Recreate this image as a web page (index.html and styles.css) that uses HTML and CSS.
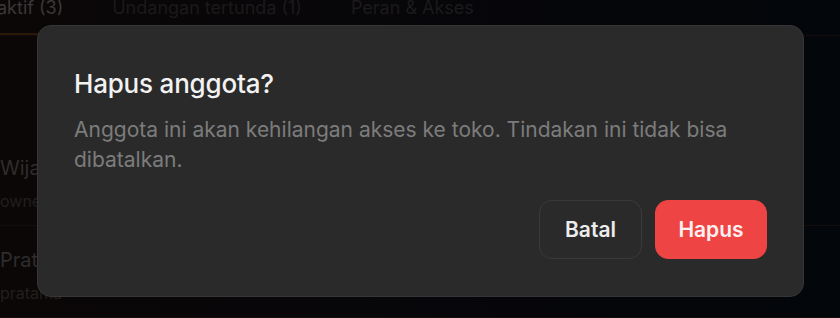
FILE: index.html
```html
<!DOCTYPE html>
<html>
    <head>
        <meta charset="utf-8" />
        <title>Hapus anggota</title>
        <link rel="stylesheet" href="styles.css">
    </head>

    <body>
        <div class="page">
            <!-- tabs -->
            <div class="tabs">
                <div class="tab active">aktif (3)</div>
                <div class="tab">Undangan tertunda (1)</div>
                <div class="tab">Peran &amp; Akses</div>
            </div>

            <!-- members -->
            <div class="list">
                <div class="row">
                    <div class="name">Wijaya</div>
                    <div class="role">owner</div>
                </div>
                <div class="row">
                    <div class="name">Pratama</div>
                    <div class="role">pratama</div>
                </div>
            </div>
        </div>

        <!-- dialog -->
        <div class="dialog">
            <h2 class="dialog-title">Hapus anggota?</h2>
            <p class="dialog-text">
                Anggota ini akan kehilangan akses ke toko. Tindakan ini tidak bisa
                dibatalkan.
            </p>
            <div class="dialog-actions">
                <button class="btn btn-cancel">Batal</button>
                <button class="btn btn-danger">Hapus</button>
            </div>
        </div>
    </body>
</html>
```

FILE: styles.css
```css
html,
body {
    margin: 0;
    height: 100%;
}

body {
    background: linear-gradient(to right, #0b0707, #06060a 60%, #03060a);
    font-family: Inter, "Noto Sans", sans-serif;
    overflow: hidden;
}

.page {
    height: 100%;
}

.tabs {
    display: flex;
    gap: 49px;
    margin-top: -4px;
    border-bottom: 1px solid #120d0c;
}

.tab {
    font-size: 18px;
    line-height: 24px;
    padding-bottom: 13px;
    color: #1c1a1a;
    border-bottom: 2px solid transparent;
}

.tab.active {
    text-indent: -3px;
    color: #3b3838;
    border-bottom-color: #2a1808;
}

.list {
    padding-top: 98px;
}

.row {
    padding: 19px 0 9px;
    border-bottom: 1px solid #120e0e;
}

.name {
    margin-bottom: 3px;
    font-size: 20px;
    line-height: 30px;
    color: #2f2c2c;
}

.role {
    font-size: 16px;
    line-height: 30px;
    color: #221f1f;
}

.dialog {
    position: absolute;
    left: 37px;
    top: 25px;
    width: 693px;
    padding: 42px 36px 37px;
    background: #2a2a2a;
    border: 1px solid #363636;
    border-radius: 14px;
}

.dialog-title {
    margin: 0 0 15px;
    font-size: 26px;
    line-height: 32px;
    font-weight: 500;
    letter-spacing: -0.2px;
    color: #f2f2f2;
}

.dialog-text {
    margin: 0;
    font-size: 21px;
    line-height: 30px;
    color: #7c7c7c;
}

.dialog-actions {
    display: flex;
    justify-content: flex-end;
    gap: 13px;
    margin-top: 25px;
}

.btn {
    height: 59px;
    padding: 0;
    border-radius: 13px;
    font-family: Inter, "Noto Sans", sans-serif;
    font-size: 21px;
    font-weight: 600;
}

.btn-cancel {
    width: 103px;
    background: #2a2a2a;
    border: 1px solid #3a3a3a;
    color: #ececec;
}

.btn-danger {
    width: 112px;
    background: #ef4444;
    border: 1px solid #ef4444;
    color: #fdf0f0;
}
```
